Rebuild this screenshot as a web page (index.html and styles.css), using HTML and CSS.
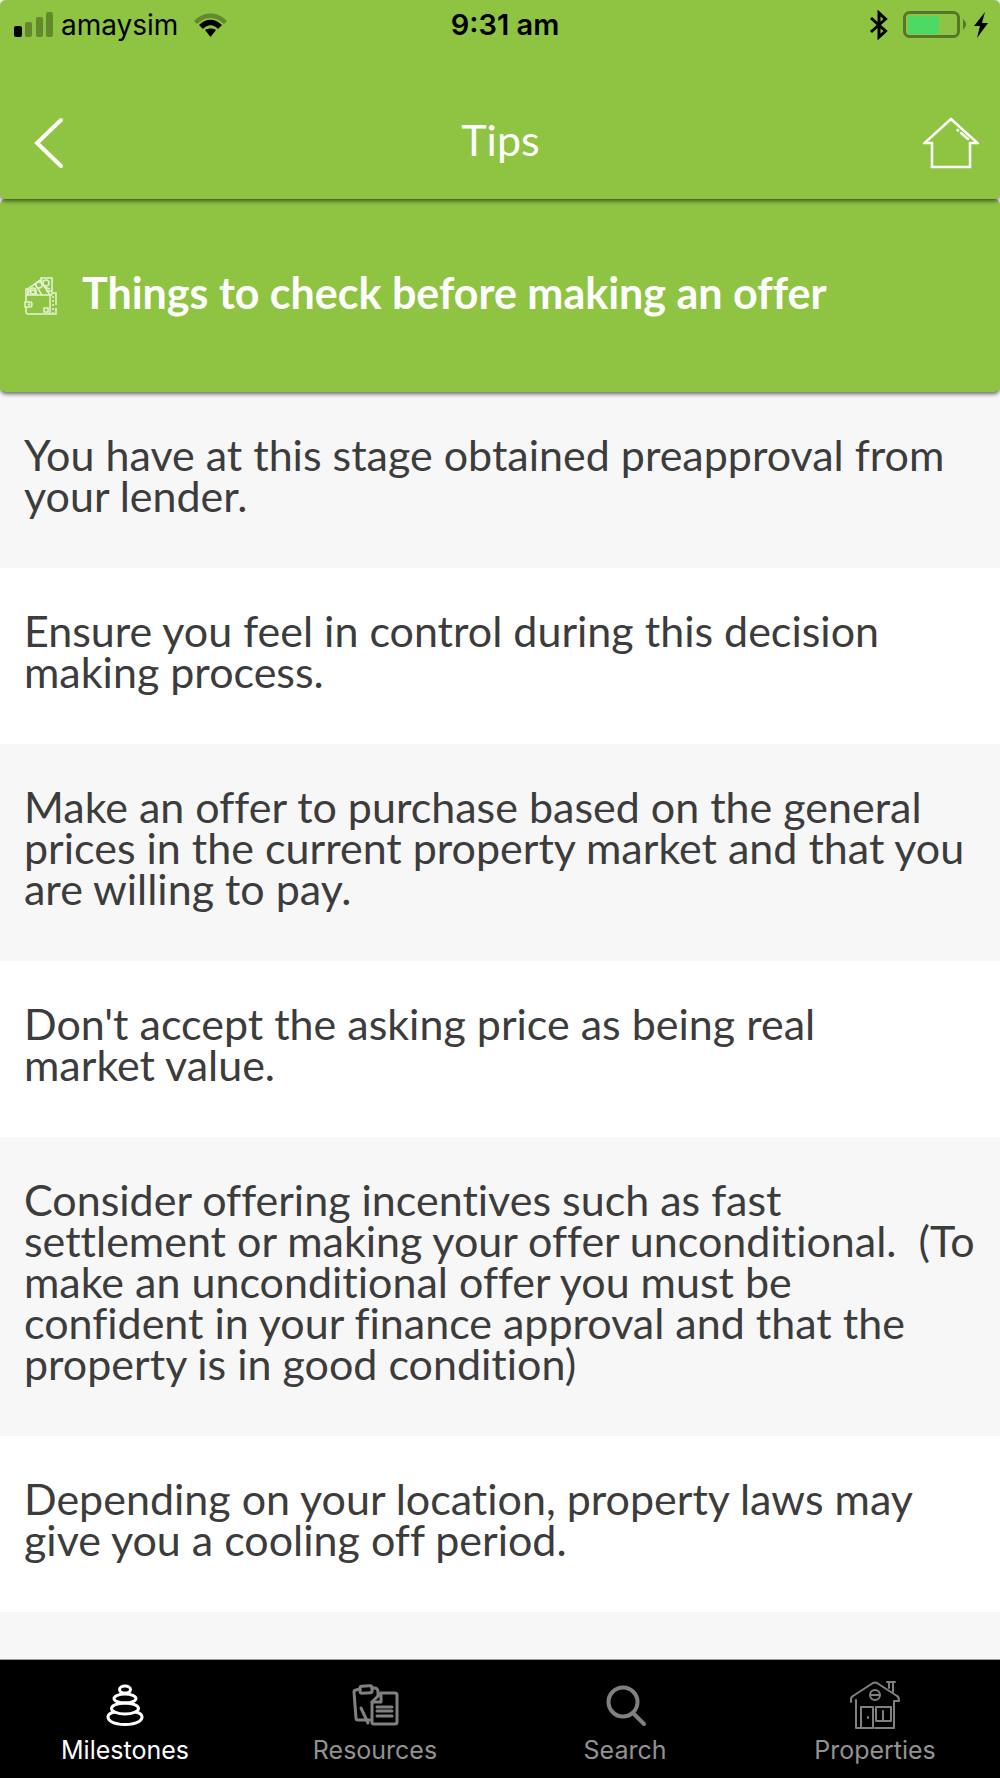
FILE: index.html
```
<!DOCTYPE html>
<html lang="en">

<head>
  <title>Tips</title>
  <meta charset="UTF-8">
  <meta name="viewport" content="width=device-width, initial-scale=1">
  <link rel="stylesheet" href="styles.css">
</head>

<body>
  <header class="header">
    <div class="statusBar">
      <div class="statusLeft">
        <svg class="signal" width="40" height="26" viewBox="0 0 40 26" aria-hidden="true">
          <rect x="0" y="14" width="8" height="11" rx="2" />
          <rect class="faded" x="11" y="10" width="7" height="15" rx="2" />
          <rect class="faded" x="22" y="5" width="7" height="20" rx="2" />
          <rect class="faded" x="32" y="0" width="7" height="25" rx="2" />
        </svg>
        <span class="carrier">amaysim</span>
        <svg width="36" height="26" viewBox="0 0 36 26" aria-hidden="true">
          <path class="faded" d="M1 9 C10 -1 25 -1 34 9 L31 12 C23 4 12 4 4 12 Z" />
          <path d="M6 13 C13 6 22 6 29 13 L25 17 C20 12 15 12 10 17 Z" />
          <path d="M12 18 C15 16 20 16 23 18 L17.500 25 Z" />
        </svg>
      </div>
      <span class="time">9:31 am</span>
      <div class="statusRight">
        <svg width="18" height="30" viewBox="0 0 18 30" aria-hidden="true">
          <path class="bluetooth" d="M1 8 L15.500 21 L9 27 V3 L15.500 9 L1 22" />
        </svg>
        <svg class="battery" width="64" height="28" viewBox="0 0 64 28" aria-hidden="true">
          <rect class="batteryCase" x="1.500" y="1.500" width="54" height="24" rx="5" />
          <rect class="batteryLevel" x="5" y="5" width="31" height="18" />
          <path class="batteryTip" d="M60 8 Q66 13 60 19 Z" />
        </svg>
        <svg width="14" height="26" viewBox="0 0 14 26" aria-hidden="true">
          <path d="M11 0 L0 14 H6 L3 26 L14 11 H8 Z" />
        </svg>
      </div>
    </div>
    <div class="navBar">
      <button class="iconButton" aria-label="Back">
        <svg width="30" height="52" viewBox="0 0 30 52">
          <path class="backLine" d="M27 3 L3 26 L27 49" />
        </svg>
      </button>
      <h1 class="pageTitle">Tips</h1>
      <button class="iconButton" aria-label="Home">
        <svg width="56" height="52" viewBox="0 0 56 52">
          <path class="homeLine" d="M9 26 H1.500 L28 2 L54.500 26 H47 V50 H9 Z" />
          <path class="homeShine" d="M34.500 13 L35 13.500 M38 16 L45 22" />
        </svg>
      </button>
    </div>
  </header>

  <main class="content">
    <div class="banner">
      <svg class="wallet" width="34" height="38" viewBox="0 0 34 38" aria-hidden="true">
        <path d="M4 12 H2 V35 Q2 37 4 37 H32 V31 M32 28 V16 H29 M2 18 H28 M26 18 V37 M4 12 V18" />
        <path d="M18 4 L17 1 H28 V18 M9 8 L16 3 L26 18 M4 18 L5 11 L11 7 L18 18 M6 16 Q9 9 13 18" />
        <circle cx="22" cy="6" r="3" />
        <circle cx="15" cy="8" r="3" />
        <circle cx="9" cy="14" r="3" />
        <path d="M20 10 L26 12 M22 14 H28" />
        <path class="walletClasp" d="M1 25 H6 Q8 25 8 27 Q8 30 6 30 H1 Z" />
        <circle cx="5" cy="27.500" r="0.500" />
        <rect x="20" y="31" width="4" height="4" />
        <path class="stitch" d="M29 19 V36" />
      </svg>
      <h2 class="bannerTitle">Things to check before making an offer</h2>
    </div>

    <ul class="tips">
      <li class="tip">You have at this stage obtained preapproval from your lender.</li>
      <li class="tip">Ensure you feel in control during this decision making process.</li>
      <li class="tip">Make an offer to purchase based on the general prices in the current property market and that you are willing to pay.</li>
      <li class="tip">Don't accept the asking price as being real<br>market value.</li>
      <li class="tip">Consider offering incentives such as fast settlement or making your offer unconditional.&nbsp; (To make an unconditional offer you must be<br>confident in your finance approval and that the property is in good condition)</li>
      <li class="tip">Depending on your location, property laws may<br>give you a cooling off period.</li>
      <li class="tip"></li>
    </ul>
  </main>

  <nav class="tabBar">
    <a class="tab active" href="#milestones">
      <svg width="52" height="52" viewBox="0 0 52 52" aria-hidden="true">
        <g class="thick">
          <ellipse cx="26" cy="9.500" rx="5.500" ry="3.500" />
          <ellipse cx="26" cy="18.500" rx="11" ry="4.500" />
          <ellipse cx="26" cy="28.500" rx="13.500" ry="5.500" />
          <path d="M15 32 C7 34 8 39 12 41.500 C19 45.500 33 45.500 40 41.500 C44 39 45 34 37 32" />
        </g>
      </svg>
      <span>Milestones</span>
    </a>
    <a class="tab" href="#resources">
      <svg width="52" height="52" viewBox="0 0 52 52" aria-hidden="true">
        <g class="medium">
          <path d="M11 9 L7 10 Q5 10 5 12 L7 38 Q7 40 9 40 H21" />
          <rect x="11" y="6" width="12" height="7" rx="2" transform="rotate(-3 17 9)" />
          <path d="M23 8 H26 Q28 8 29 11 V16" />
          <path d="M12 28 L19 43" />
          <path d="M32 13 H46 Q48 13 48 15 V42 Q48 44 46 44 H25 Q23 44 23 42 V22 Z" />
          <path d="M32 13 V22 H23" />
          <path d="M28 27 H43 M28 31 H43 M28 36 H43" />
        </g>
      </svg>
      <span>Resources</span>
    </a>
    <a class="tab" href="#search">
      <svg width="52" height="52" viewBox="0 0 52 52" aria-hidden="true">
        <g class="bold">
          <circle cx="24" cy="22" r="14.500" />
          <path d="M34 33 L45 44" />
        </g>
      </svg>
      <span>Search</span>
    </a>
    <a class="tab" href="#properties">
      <svg width="52" height="52" viewBox="0 0 52 52" aria-hidden="true">
        <g class="thin">
          <path d="M2 22 V19 Q2 17 4 16 L24 3 Q26 2 28 3 L48 16 Q50 17 50 21 H45 V48 H26" />
          <path d="M7 20 V48 H24 V27 H12 V48" />
          <path d="M38 2 H46 M40 2 V8 M44 2 V12" />
          <circle cx="26" cy="15" r="5" />
          <path d="M22 15 H30" />
          <rect x="27" y="27" width="15" height="14" />
          <path d="M34 31 V41" />
          <path d="M19 37 V38" />
        </g>
      </svg>
      <span>Properties</span>
    </a>
  </nav>
</body>

</html>
```
FILE: styles.css
```
* {
  box-sizing: border-box;
}

body {
  margin: 0;
  height: 100vh;
  display: flex;
  flex-direction: column;
  overflow: hidden;
  background-color: #f7f7f7;
  font-family: Lato, sans-serif;
  font-variant-ligatures: no-common-ligatures;
}

h1,
h2,
ul {
  margin: 0;
  padding: 0;
}

/* header */
.header {
  position: relative;
  flex: none;
  background-color: #8ec441;
  border-radius: 6px;
  box-shadow: 0 2px 4px rgba(0, 0, 0, 0.6);
  z-index: 2;
}

.statusBar {
  display: grid;
  grid-template-columns: 1fr auto 1fr;
  align-items: center;
  height: 50px;
  padding: 0 12px 0 14px;
  font-family: Inter, sans-serif;
  font-size: 28px;
  line-height: 32px;
}

.statusLeft,
.statusRight {
  display: flex;
  align-items: center;
  gap: 7px;
}

.statusRight {
  justify-content: flex-end;
}

.carrier {
  margin-right: 8px;
}

.battery {
  margin-left: 8px;
}

.time {
  font-size: 29px;
  font-weight: 600;
  margin-left: 8px;
}

.faded {
  opacity: 0.3;
}

.bluetooth {
  fill: none;
  stroke: #000000;
  stroke-width: 3;
}

.batteryCase {
  fill: none;
  stroke: #56772a;
  stroke-width: 3;
}

.batteryLevel {
  fill: #4cd964;
}

.batteryTip {
  fill: #56772a;
}

.navBar {
  display: grid;
  grid-template-columns: 1fr auto 1fr;
  align-items: center;
  height: 149px;
  padding: 37px 21px 0 34px;
}

.iconButton {
  padding: 0;
  border: none;
  background: none;
  cursor: pointer;
  line-height: 0;
  justify-self: start;
}

.iconButton:last-child {
  justify-self: end;
}

.backLine,
.homeLine,
.homeShine {
  fill: none;
  stroke: #ffffff;
  stroke-width: 3;
  stroke-linecap: round;
}

.homeLine,
.homeShine {
  stroke-width: 2.500;
}

.backLine {
  stroke-width: 4;
}

.pageTitle {
  padding-bottom: 6px;
  margin-right: 12px;
  color: #ffffff;
  font-size: 43px;
  font-weight: 400;
  line-height: 48px;
}

/* tips list */
.content {
  flex: 1;
  min-height: 0;
  overflow: hidden;
}

.banner {
  position: relative;
  display: flex;
  align-items: center;
  gap: 24px;
  height: 193px;
  padding: 0 24px;
  background-color: #8ec441;
  border-radius: 6px;
  box-shadow: 0 2px 4px rgba(0, 0, 0, 0.6);
}

.wallet {
  flex: none;
  fill: none;
  stroke: #e6f2d4;
  stroke-width: 1.500;
}

.walletClasp {
  fill: #8ec441;
}

.stitch {
  stroke-dasharray: 2 2;
}

.bannerTitle {
  padding-bottom: 6px;
  color: #ffffff;
  font-size: 43px;
  font-weight: 700;
  line-height: 48px;
}

.tips {
  list-style: none;
}

.tip {
  padding: 42px 24px 52px;
  color: #3c3c3c;
  font-size: 43px;
  line-height: 41px;
}

.tip:nth-child(even) {
  background-color: #ffffff;
}

/* bottom tabs */
.tabBar {
  flex: none;
  display: grid;
  grid-template-columns: repeat(4, 1fr);
  height: 119px;
  padding-top: 20px;
  background-color: #000000;
  border-top: 1px solid #999999;
}

.tab {
  display: flex;
  flex-direction: column;
  align-items: center;
  gap: 4px;
  color: #929292;
  font-family: Inter, sans-serif;
  font-size: 25px;
  font-weight: 400;
  line-height: 28px;
  text-decoration: none;
}

.tab.active {
  color: #ffffff;
}

.tab svg {
  fill: none;
  stroke: #808080;
  stroke-linecap: round;
  stroke-linejoin: round;
}

.tab.active svg {
  stroke: #ffffff;
}

.thin {
  stroke-width: 2;
}

.medium {
  stroke-width: 3;
}

.thick {
  stroke-width: 3;
}

.bold {
  stroke-width: 4;
}
```
